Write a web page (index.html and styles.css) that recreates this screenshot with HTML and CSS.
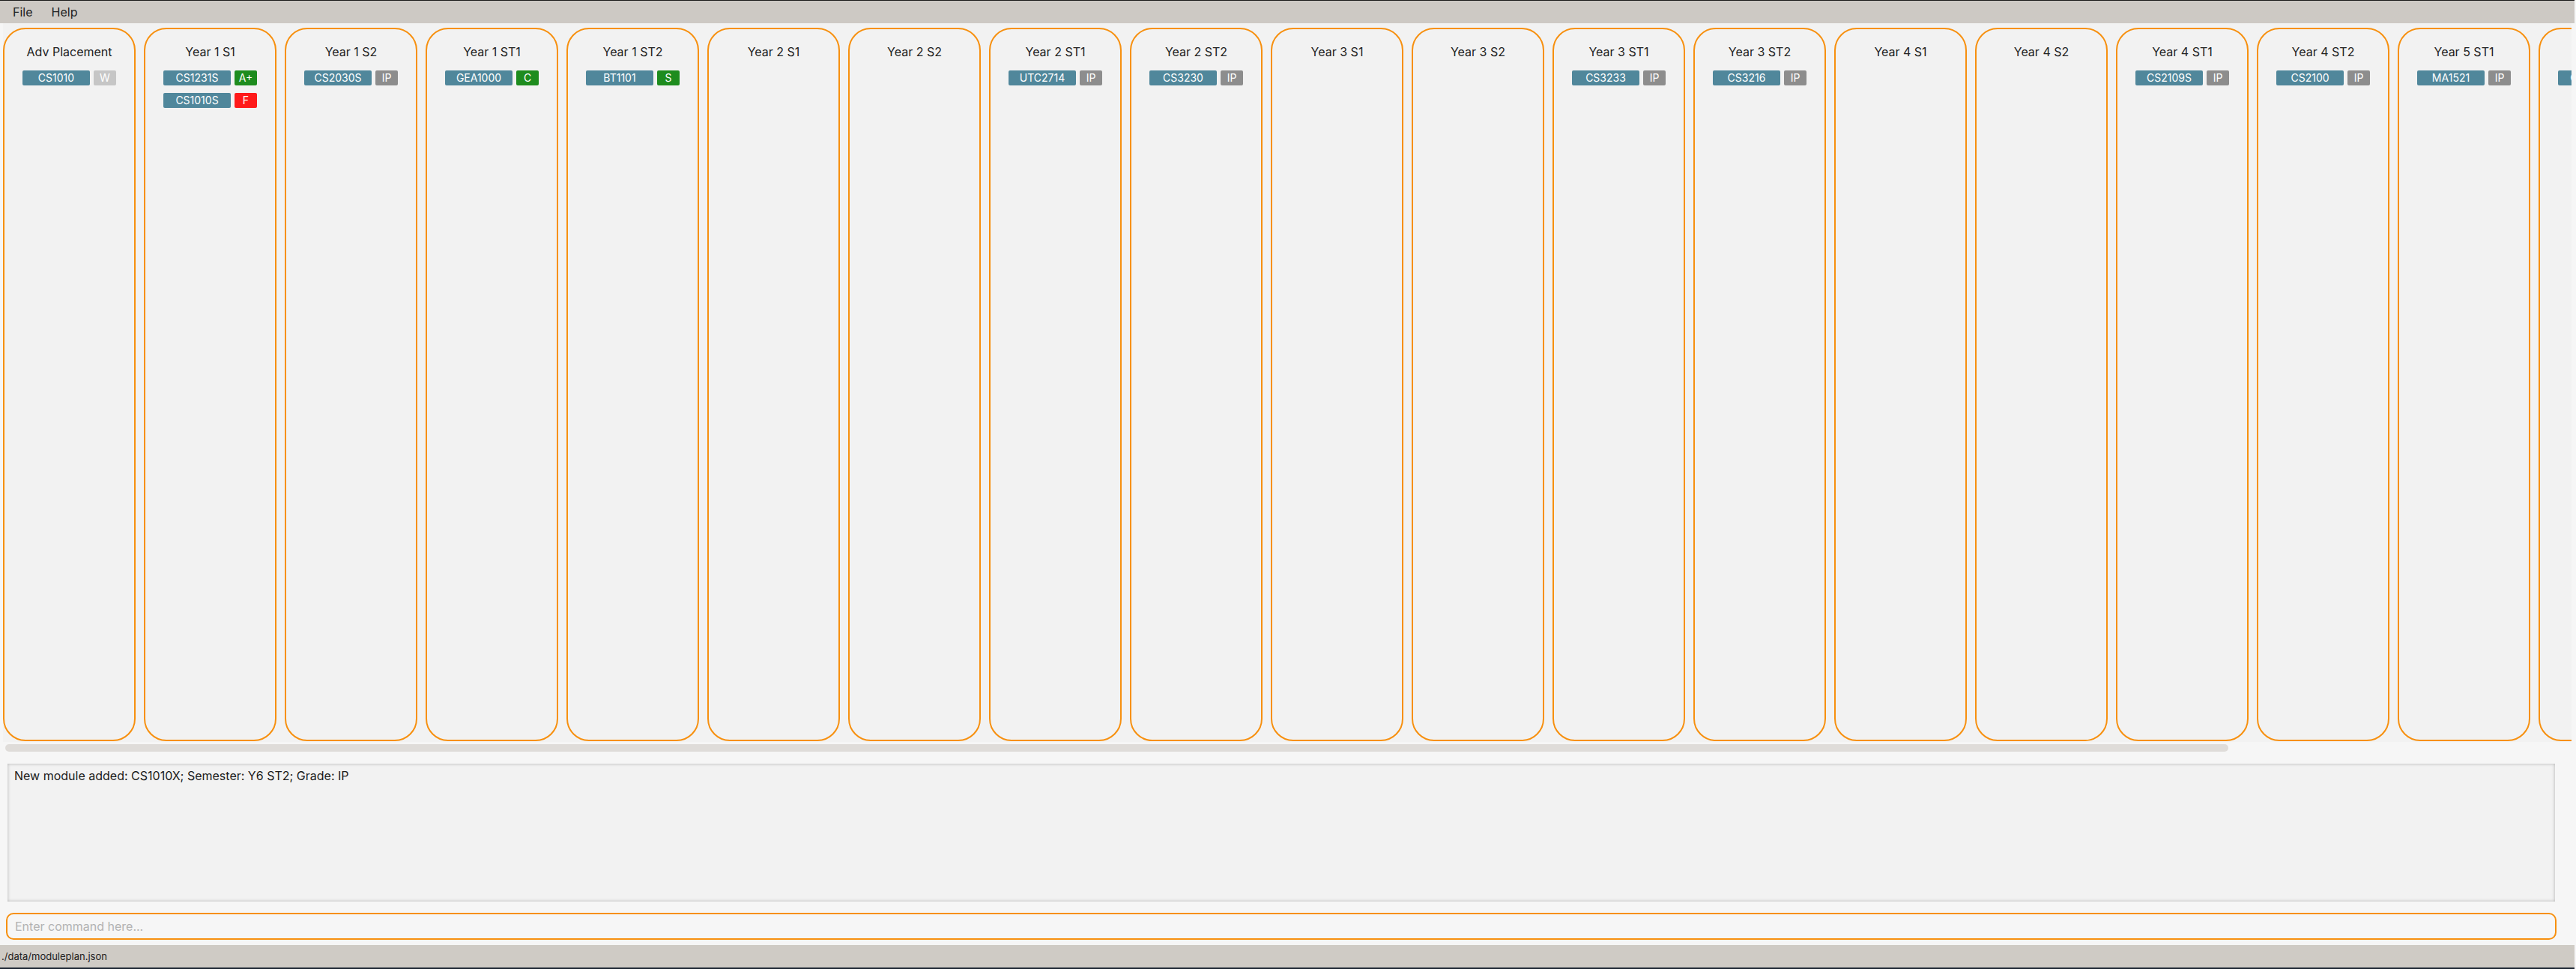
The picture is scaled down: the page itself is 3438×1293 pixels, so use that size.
FILE: index.html
```html
<!DOCTYPE html>
<html lang="en">
<head>
<meta charset="utf-8">
<title>Module Plan</title>
<link rel="stylesheet" href="styles.css">
</head>
<body>
<div class="app">
  <nav class="menubar">
    <span class="menu-item">File</span>
    <span class="menu-item">Help</span>
  </nav>
  <section class="board">
    <div class="columns">
      <div class="sem"><div class="sem-title">Adv Placement</div>
        <div class="mod"><span class="code">CS1010</span><span class="grade g-w">W</span></div>
      </div>
      <div class="sem"><div class="sem-title">Year 1 S1</div>
        <div class="mod"><span class="code">CS1231S</span><span class="grade g-pass">A+</span></div>
        <div class="mod"><span class="code">CS1010S</span><span class="grade g-fail">F</span></div>
      </div>
      <div class="sem"><div class="sem-title">Year 1 S2</div>
        <div class="mod"><span class="code">CS2030S</span><span class="grade g-ip">IP</span></div>
      </div>
      <div class="sem"><div class="sem-title">Year 1 ST1</div>
        <div class="mod"><span class="code">GEA1000</span><span class="grade g-pass">C</span></div>
      </div>
      <div class="sem"><div class="sem-title">Year 1 ST2</div>
        <div class="mod"><span class="code">BT1101</span><span class="grade g-pass">S</span></div>
      </div>
      <div class="sem"><div class="sem-title">Year 2 S1</div></div>
      <div class="sem"><div class="sem-title">Year 2 S2</div></div>
      <div class="sem"><div class="sem-title">Year 2 ST1</div>
        <div class="mod"><span class="code">UTC2714</span><span class="grade g-ip">IP</span></div>
      </div>
      <div class="sem"><div class="sem-title">Year 2 ST2</div>
        <div class="mod"><span class="code">CS3230</span><span class="grade g-ip">IP</span></div>
      </div>
      <div class="sem"><div class="sem-title">Year 3 S1</div></div>
      <div class="sem"><div class="sem-title">Year 3 S2</div></div>
      <div class="sem"><div class="sem-title">Year 3 ST1</div>
        <div class="mod"><span class="code">CS3233</span><span class="grade g-ip">IP</span></div>
      </div>
      <div class="sem"><div class="sem-title">Year 3 ST2</div>
        <div class="mod"><span class="code">CS3216</span><span class="grade g-ip">IP</span></div>
      </div>
      <div class="sem"><div class="sem-title">Year 4 S1</div></div>
      <div class="sem"><div class="sem-title">Year 4 S2</div></div>
      <div class="sem"><div class="sem-title">Year 4 ST1</div>
        <div class="mod"><span class="code">CS2109S</span><span class="grade g-ip">IP</span></div>
      </div>
      <div class="sem"><div class="sem-title">Year 4 ST2</div>
        <div class="mod"><span class="code">CS2100</span><span class="grade g-ip">IP</span></div>
      </div>
      <div class="sem"><div class="sem-title">Year 5 ST1</div>
        <div class="mod"><span class="code">MA1521</span><span class="grade g-ip">IP</span></div>
      </div>
      <div class="sem"><div class="sem-title">Year 6 ST2</div>
        <div class="mod"><span class="code">CS1010X</span><span class="grade g-ip">IP</span></div>
      </div>
    </div>
  </section>
  <div class="hscroll"><div class="thumb"></div></div>
  <div class="result">New module added: CS1010X; Semester: Y6 ST2; Grade: IP</div>
  <div class="command"><input class="command-input" type="text" placeholder="Enter command here..."></div>
  <footer class="status">./data/moduleplan.json</footer>
</div>
</body>
</html>
```
FILE: styles.css
```css
html, body {
  margin: 0;
  padding: 0;
}
body {
  width: 3438px;
  height: 1293px;
  overflow: hidden;
  background: #f6f6f6;
  font-family: Inter, "Noto Sans", "Liberation Sans", sans-serif;
  color: #222;
}
.app {
  width: 3436px;
  height: 1293px;
  display: flex;
  flex-direction: column;
  background: #f6f6f6;
}
.menubar {
  box-sizing: border-box;
  height: 31px;
  flex-shrink: 0;
  border-top: 1px solid #1a1a1a;
  background: #cdc9c4;
  display: flex;
  align-items: center;
  padding-left: 17px;
  gap: 25px;
  font-size: 16px;
  color: #222;
}
.board {
  flex-shrink: 0;
  margin-left: 4px;
  width: 3428px;
  height: 959px;
  background: #f2f2f2;
  overflow: hidden;
}
.columns {
  display: flex;
  gap: 11px;
  padding-top: 6px;
}
.sem {
  box-sizing: border-box;
  flex-shrink: 0;
  width: 177px;
  height: 952px;
  border: 2px solid #f7900f;
  border-radius: 30px;
  background: #f2f2f2;
  padding-top: 19px;
  display: flex;
  flex-direction: column;
  align-items: center;
}
.sem-title {
  font-size: 16px;
  line-height: 22px;
  height: 22px;
  margin-bottom: 14px;
  color: #222;
}
.mod {
  display: flex;
  gap: 5px;
  margin-bottom: 10px;
}
.code, .grade {
  height: 20px;
  line-height: 20px;
  border-radius: 2px;
  color: #fff;
  font-size: 14px;
  text-align: center;
}
.code {
  width: 90px;
  background: #50879b;
}
.grade {
  width: 30px;
}
.g-w { background: #c6c6c6; }
.g-ip { background: #8d8d8d; }
.g-pass { background: #1e8c1e; }
.g-fail { background: #ff1a1a; }
.hscroll {
  flex-shrink: 0;
  height: 10px;
  padding: 3px 0 0 7px;
}
.thumb {
  width: 2967px;
  height: 10px;
  border-radius: 5px;
  background: #dfdcd9;
}
.result {
  box-sizing: border-box;
  flex-shrink: 0;
  margin: 16px 0 0 10px;
  width: 3400px;
  height: 184px;
  background: #f2f2f2;
  box-shadow: inset 0 0 4px rgba(0, 0, 0, 0.28);
  padding: 5px 9px;
  font-size: 16px;
  line-height: 22px;
  color: #1a1a1a;
}
.command {
  flex-shrink: 0;
  margin: 15px 0 0 8px;
  width: 3404px;
  height: 36px;
}
.command-input {
  box-sizing: border-box;
  width: 100%;
  height: 36px;
  border: 2px solid #f7900f;
  border-radius: 10px;
  background: #f6f6f6;
  padding: 0 0 0 10px;
  font-family: Inter, "Noto Sans", "Liberation Sans", sans-serif;
  font-size: 16px;
  color: #222;
  outline: none;
}
.command-input::placeholder {
  color: #b2b2b2;
}
.status {
  box-sizing: border-box;
  flex-shrink: 0;
  margin-top: 7px;
  height: 32px;
  border-bottom: 2px solid #1d2633;
  background: #cfcbc5;
  padding-left: 2px;
  font-size: 13px;
  line-height: 30px;
  color: #222;
}
```
